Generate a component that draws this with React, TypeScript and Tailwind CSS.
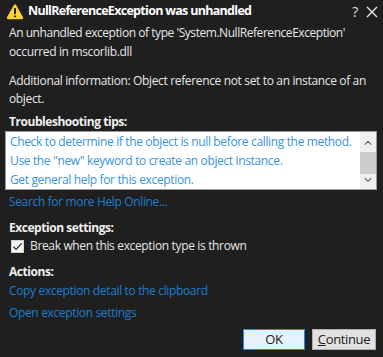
import { ChevronDown, ChevronUp } from "lucide-react";

const font = { fontFamily: '"Open Sans", "Noto Sans", sans-serif' };

function WarningIcon() {
  return (
    <svg width="18" height="17" viewBox="0 0 17 16">
      <path
        d="M8.5 1.2c.5 0 .9.3 1.2.8l6.4 11.4c.5.9-.1 1.9-1.1 1.9H2c-1 0-1.6-1-1.1-1.9L7.3 2c.3-.5.7-.8 1.2-.8z"
        fill="#f8d23a"
      />
      <rect x="7.6" y="4.6" width="1.8" height="6" rx="0.6" fill="#1a1a1a" />
      <rect x="7.6" y="11.7" width="1.8" height="1.8" rx="0.6" fill="#1a1a1a" />
    </svg>
  );
}

function Heading({ children }: { children: React.ReactNode }) {
  return (
    <div className="h-[18px] leading-[18px] font-bold text-[#f1f1f1] tracking-[-0.45px]">{children}</div>
  );
}

export default function App() {
  return (
    <div
      className="w-[383px] h-[357px] bg-[#1f1f1f] text-[#e8e8e8] text-[12px] tracking-[-0.35px] overflow-hidden flex flex-col whitespace-nowrap"
      style={font}
    >
      <div className="h-[23px] flex items-center pl-[6px] pr-[5px]">
        <WarningIcon />
        <span className="ml-[4px] text-[12.5px] font-bold text-white tracking-[-0.7px]">
          NullReferenceException was unhandled
        </span>
        <span className="ml-auto text-[14px] text-[#e0e0e0]">?</span>
        <svg width="12" height="12" viewBox="0 0 12 12" className="ml-[8px]">
          <path d="M1 1l10 10M11 1L1 11" stroke="#e8e8e8" strokeWidth="1.4" />
        </svg>
      </div>

      <div className="flex flex-col px-[9px]">
        <div className="leading-[19px] tracking-[-0.45px]">An unhandled exception of type 'System.NullReferenceException'</div>
        <div className="leading-[19px]">occurred in mscorlib.dll</div>
        <div className="mt-[11px] leading-[18px]">
          Additional information: Object reference not set to an instance of an
        </div>
        <div className="leading-[18px]">object.</div>
      </div>

      <div className="mt-[5px] px-[9px]">
        <Heading>Troubleshooting tips:</Heading>
      </div>

      <div className="mx-[5px] w-[372px] h-[59px] border border-[#9a9a9a] bg-white flex">
        <div className="flex-1 flex flex-col text-[#3794dc] pl-[4px] overflow-hidden">
          <div className="h-[19px] leading-[19px]">Check to determine if the object is null before calling the method.</div>
          <div className="h-[19px] leading-[19px]">Use the "new" keyword to create an object instance.</div>
          <div className="h-[19px] leading-[19px]">Get general help for this exception.</div>
        </div>
        <div className="w-[16px] bg-[#f0f0f0] flex flex-col items-center">
          <ChevronUp size={12} strokeWidth={2.2} className="text-[#606060] mt-[5px]" />
          <div className="w-[16px] h-[23px] bg-[#cdcdcd] mt-[3px]" />
          <div className="flex-1" />
          <ChevronDown size={12} strokeWidth={2.2} className="text-[#606060] mb-[3px]" />
        </div>
      </div>

      <div className="px-[9px] flex flex-col">
        <div className="mt-[3px] h-[18px] leading-[18px] text-[#1c7ecf]">Search for more Help Online...</div>
        <div className="mt-[8px]">
          <Heading>Exception settings:</Heading>
        </div>
        <div className="h-[18px] flex items-center pl-[2px]">
          <div className="w-[13px] h-[13px] bg-[#f3f3f3] border border-[#d0d0d0] flex items-center justify-center">
            <svg width="11" height="11" viewBox="0 0 11 11">
              <path d="M1.5 5.8l2.6 2.6L9.6 2.4" fill="none" stroke="#262626" strokeWidth="1.3" />
            </svg>
          </div>
          <span className="ml-[6px]">Break when this exception type is thrown</span>
        </div>
        <div className="mt-[8px]">
          <Heading>Actions:</Heading>
        </div>
        <div className="mt-[1px] h-[18px] leading-[18px] text-[#1c7ecf]">Copy exception detail to the clipboard</div>
        <div className="mt-[4px] h-[18px] leading-[18px] text-[#1c7ecf]">Open exception settings</div>
      </div>

      <div className="mt-[7px] flex justify-end gap-[7px] pr-[7px]">
        <button className="w-[62px] h-[21px] bg-[#e5f1fb] border border-[#2e86de] text-[#1a1a1a] text-[13px] leading-none">
          OK
        </button>
        <button className="w-[64px] h-[21px] bg-[#e1e1e1] border border-[#adadad] text-[#1a1a1a] text-[13px] leading-none">
          <span className="underline">C</span>ontinue
        </button>
      </div>
    </div>
  );
}
